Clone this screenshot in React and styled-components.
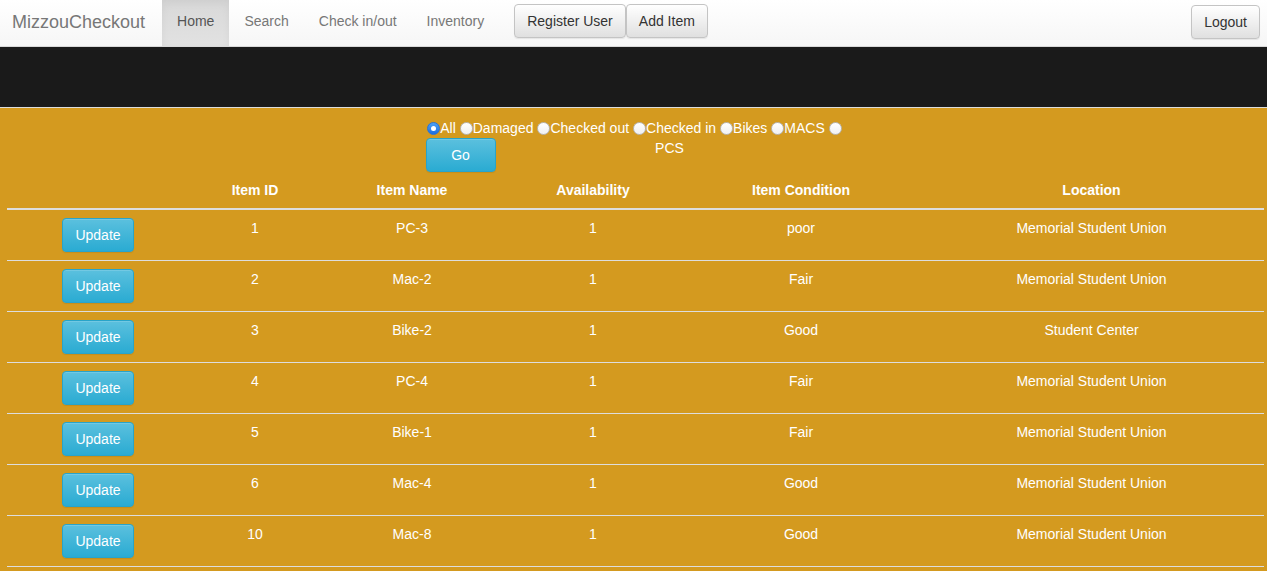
import React from "react";
import styled, { createGlobalStyle } from "styled-components";

const Global = createGlobalStyle`
  html, body { margin: 0; padding: 0; background: #d49a1f; }
  body { font-family: "Liberation Sans", Arial, Helvetica, sans-serif; font-size: 14px; line-height: 20px; color: #333; }
  * { box-sizing: border-box; }
`;

const Page = styled.div`
  display: flex;
  flex-direction: column;
  min-height: 571px;
`;

const NavBar = styled.nav`
  height: 47px;
  display: flex;
  align-items: stretch;
  background: linear-gradient(to bottom, #ffffff 0%, #f6f6f6 100%);
  border-bottom: 1px solid #d9d9d9;
  padding-right: 7px;
`;

const Brand = styled.a`
  display: flex;
  align-items: center;
  padding: 0 17px 2px 12px;
  font-size: 18px;
  color: #777;
  text-decoration: none;
`;

const NavLink = styled.a`
  display: flex;
  align-items: center;
  padding: 0 15px 4px;
  font-size: 14px;
  color: ${p => (p.$active ? "#555" : "#777")};
  text-decoration: none;
  background: ${p => (p.$active ? "linear-gradient(to bottom, #d8d8d8 0%, #e2e2e2 100%)" : "transparent")};
  box-shadow: ${p => (p.$active ? "inset 0 3px 9px rgba(0,0,0,0.05)" : "none")};
`;

const NavButtons = styled.div`
  display: flex;
  align-items: flex-start;
  padding-top: 4px;
  margin-left: 15px;
`;

const DefaultButton = styled.button`
  height: 34px;
  padding: 6px 12px;
  font-family: inherit;
  font-size: 14px;
  color: #333;
  background: linear-gradient(to bottom, #ffffff 0%, #e0e0e0 100%);
  border: 1px solid #c4c4c4;
  border-radius: 4px;
  box-shadow: inset 0 1px 0 rgba(255,255,255,0.15), 0 1px 1px rgba(0,0,0,0.075);
  cursor: pointer;
`;

const Spacer = styled.div`
  flex: 1;
`;

const LogoutWrap = styled.div`
  display: flex;
  align-items: flex-start;
  padding-top: 5px;
`;

const DarkBand = styled.div`
  height: 61px;
  background: #1a1a1a;
  border-bottom: 1px solid #dcdcdc;
`;

const Main = styled.main`
  flex: 1;
  background: #d49a1f;
  padding: 10px 3px 0 7px;
`;

const FilterForm = styled.form`
  width: 418px;
  margin-left: calc(50% - 210px);
  color: #fff;
`;

const RadioRow = styled.div`
  display: flex;
  justify-content: center;
  align-items: center;
  height: 20px;
  white-space: nowrap;
`;

const RadioLabel = styled.label`
  display: inline-flex;
  align-items: center;
  margin-right: ${p => (p.$last ? "0" : "4px")};
  color: #fff;
  cursor: pointer;
`;

const RadioDot = styled.span`
  width: 13px;
  height: 13px;
  border-radius: 50%;
  display: inline-flex;
  align-items: center;
  justify-content: center;
  background: ${p => (p.$checked ? "linear-gradient(to bottom, #4aa0f5, #1c6fe0)" : "linear-gradient(to bottom, #ffffff, #f0f0f0)")};
  border: 1px solid ${p => (p.$checked ? "#2a73d6" : "#b8b8b8")};
  &::after {
    content: "";
    width: 5px;
    height: 5px;
    border-radius: 50%;
    background: #fff;
    display: ${p => (p.$checked ? "block" : "none")};
  }
`;

const SecondRow = styled.div`
  display: flex;
  align-items: flex-start;
`;

const PcsLabel = styled.span`
  flex: 1;
  text-align: center;
  line-height: 20px;
`;

const InfoButton = styled.button`
  height: 34px;
  width: ${p => p.$w || "auto"};
  padding: 6px 12px;
  font-family: inherit;
  font-size: 14px;
  color: #fff;
  background: linear-gradient(to bottom, #5bc0de 0%, #2aabd2 100%);
  border: 1px solid #28a4c9;
  border-radius: 4px;
  box-shadow: inset 0 1px 0 rgba(255,255,255,0.15), 0 1px 1px rgba(0,0,0,0.075);
  cursor: pointer;
`;

const Table = styled.table`
  width: 1257px;
  border-collapse: collapse;
  color: #fff;
`;

const Th = styled.th`
  padding: 8px;
  font-weight: bold;
  text-align: center;
  border-bottom: 2px solid #dddddd;
  line-height: 20px;
`;

const Td = styled.td`
  padding: 8px;
  text-align: center;
  vertical-align: top;
  line-height: 20px;
  border-bottom: 1px solid #dddddd;
`;

const items = [
  { id: 1, name: "PC-3", avail: 1, cond: "poor", loc: "Memorial Student Union" },
  { id: 2, name: "Mac-2", avail: 1, cond: "Fair", loc: "Memorial Student Union" },
  { id: 3, name: "Bike-2", avail: 1, cond: "Good", loc: "Student Center" },
  { id: 4, name: "PC-4", avail: 1, cond: "Fair", loc: "Memorial Student Union" },
  { id: 5, name: "Bike-1", avail: 1, cond: "Fair", loc: "Memorial Student Union" },
  { id: 6, name: "Mac-4", avail: 1, cond: "Good", loc: "Memorial Student Union" },
  { id: 10, name: "Mac-8", avail: 1, cond: "Good", loc: "Memorial Student Union" },
];

const filters = ["All", "Damaged", "Checked out", "Checked in", "Bikes", "MACS"];

export default function App() {
  return (
    <Page>
      <Global />
      <NavBar>
        <Brand href="#">MizzouCheckout</Brand>
        <NavLink href="#" $active>Home</NavLink>
        <NavLink href="#">Search</NavLink>
        <NavLink href="#">Check in/out</NavLink>
        <NavLink href="#">Inventory</NavLink>
        <NavButtons>
          <DefaultButton type="button">Register User</DefaultButton>
          <DefaultButton type="button">Add Item</DefaultButton>
        </NavButtons>
        <Spacer />
        <LogoutWrap>
          <DefaultButton type="button">Logout</DefaultButton>
        </LogoutWrap>
      </NavBar>
      <DarkBand />
      <Main>
        <FilterForm onSubmit={e => e.preventDefault()}>
          <RadioRow>
            {filters.map((f, i) => (
              <RadioLabel key={f}>
                <RadioDot $checked={i === 0} />
                {f}
              </RadioLabel>
            ))}
            <RadioLabel $last>
              <RadioDot />
            </RadioLabel>
          </RadioRow>
          <SecondRow>
            <InfoButton type="submit" $w="70px">Go</InfoButton>
            <PcsLabel>PCS</PcsLabel>
          </SecondRow>
        </FilterForm>
        <Table>
          <colgroup>
            <col style={{ width: 182 }} />
            <col style={{ width: 132 }} />
            <col style={{ width: 182 }} />
            <col style={{ width: 180 }} />
            <col style={{ width: 236 }} />
            <col style={{ width: 345 }} />
          </colgroup>
          <thead>
            <tr>
              <Th></Th>
              <Th>Item ID</Th>
              <Th>Item Name</Th>
              <Th>Availability</Th>
              <Th>Item Condition</Th>
              <Th>Location</Th>
            </tr>
          </thead>
          <tbody>
            {items.map(it => (
              <tr key={it.id}>
                <Td>
                  <InfoButton type="button" $w="72px">Update</InfoButton>
                </Td>
                <Td>{it.id}</Td>
                <Td>{it.name}</Td>
                <Td>{it.avail}</Td>
                <Td>{it.cond}</Td>
                <Td>{it.loc}</Td>
              </tr>
            ))}
          </tbody>
        </Table>
      </Main>
    </Page>
  );
}
